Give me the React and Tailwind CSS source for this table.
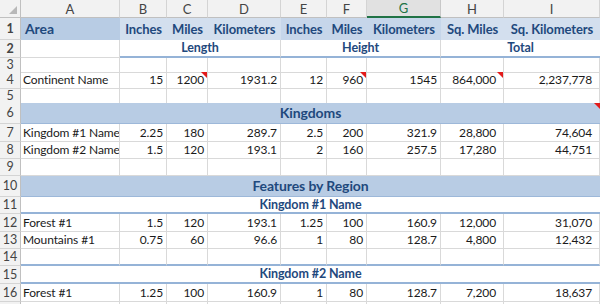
import React from "react";

const grid = "grid grid-cols-[21px_99px_47px_41px_73px_46px_40px_74px_63px_96px]";
const navy = "text-[#1f497d]";

function RowHead({ n }) {
  return (
    <div className="flex items-center justify-center border-r border-b border-r-[#c0c0c0] border-b-[#d4d4d4] bg-[#f2f2f2] text-[12.5px] tracking-normal text-[#444]">
      {n}
    </div>
  );
}

function Cell({ children, left, wide, note, className = "" }) {
  return (
    <div
      className={`relative flex items-center overflow-hidden whitespace-nowrap border-r border-b border-[#d9d9d9] ${
        left ? "justify-start pl-[2px]" : wide ? "justify-end pr-[7px]" : "justify-end pr-[3px]"
      } ${className}`}
    >
      {children}
      {note ? (
        <span className="absolute top-0 right-0 h-0 w-0 border-t-[6px] border-l-[6px] border-t-[#e21b1b] border-l-transparent" />
      ) : null}
    </div>
  );
}

function DataRow({ n, h, values, notes = [], className = "" }) {
  return (
    <div className={`${grid} ${h}`}>
      <RowHead n={n} />
      {values.map((v, i) => (
        <Cell
          key={i}
          left={i === 0}
          wide={i >= 7}
          note={notes.includes(i)}
          className={className}
        >
          {v}
        </Cell>
      ))}
    </div>
  );
}

function Band({ n, h, title, note }) {
  return (
    <div className={`${grid} ${h}`}>
      <RowHead n={n} />
      <div
        className={`relative col-span-9 flex items-center justify-center border-b border-[#9db8d9] bg-[#b8cce4] text-[14px] font-bold ${navy}`}
      >
        {title}
        {note ? (
          <span className="absolute top-0 right-0 h-0 w-0 border-t-[6px] border-l-[6px] border-t-[#e21b1b] border-l-transparent" />
        ) : null}
      </div>
    </div>
  );
}

function SubHead({ n, h, title }) {
  return (
    <div className={`${grid} ${h}`}>
      <RowHead n={n} />
      <div
        className={`col-span-9 flex items-center justify-center border-b-2 border-[#95b3d7] text-[12.5px] font-bold ${navy}`}
      >
        {title}
      </div>
    </div>
  );
}

const empty = ["", "", "", "", "", "", "", "", ""];

export default function App() {
  const letters = ["A", "B", "C", "D", "E", "F", "G", "H", "I"];

  return (
    <div className="h-[304px] w-[600px] overflow-hidden bg-white font-['Lato','Liberation_Sans',sans-serif] text-[12px] leading-[14px] tracking-[-0.1px] text-[#1a1a1a]">
      {/* column letters */}
      <div className={`${grid} h-[18px] text-[13px] tracking-normal`}>
        <div className="relative border-r border-b border-[#c0c0c0] bg-[#f2f2f2]">
          <span className="absolute right-[3px] bottom-[3px] h-0 w-0 border-b-[8px] border-l-[8px] border-b-[#b8b8b8] border-l-transparent" />
        </div>
        {letters.map((l) =>
          l === "G" ? (
            <div
              key={l}
              className="flex items-center justify-center border-r border-b-2 border-r-[#c8c8c8] border-b-[#217346] bg-[#e1e1e1] text-[#217346]"
            >
              {l}
            </div>
          ) : (
            <div
              key={l}
              className="flex items-center justify-center border-r border-b border-r-[#d4d4d4] border-b-[#c0c0c0] bg-[#f2f2f2] text-[#444]"
            >
              {l}
            </div>
          )
        )}
      </div>

      {/* row 1 */}
      <div className={`${grid} h-[22px] font-bold ${navy} text-[13px]`}>
        <RowHead n={1} />
        <div className="flex items-center bg-[#b8cce4] pl-[4px] text-[14px]">Area</div>
        <div className="flex items-center justify-center bg-[#d3dfee]">Inches</div>
        <div className="flex items-center justify-center bg-[#d3dfee]">Miles</div>
        <div className="flex items-center justify-center bg-[#d3dfee]">Kilometers</div>
        <div className="flex items-center justify-center bg-[#c6d6ea]">Inches</div>
        <div className="flex items-center justify-center bg-[#c6d6ea]">Miles</div>
        <div className="flex items-center justify-center bg-[#c6d6ea]">Kilometers</div>
        <div className="flex items-center justify-center bg-[#d3dfee]">Sq. Miles</div>
        <div className="flex items-center justify-center bg-[#d3dfee]">Sq. Kilometers</div>
      </div>

      {/* row 2 */}
      <div className={`${grid} h-[18px] text-[12.5px] font-bold ${navy}`}>
        <RowHead n={2} />
        <div className="border-r border-b border-[#d9d9d9]" />
        <div className="col-span-3 flex items-center justify-center border-r border-r-[#d9d9d9] border-b-2 border-b-[#95b3d7]">
          Length
        </div>
        <div className="col-span-3 flex items-center justify-center border-r border-r-[#d9d9d9] border-b-2 border-b-[#95b3d7]">
          Height
        </div>
        <div className="col-span-2 flex items-center justify-center border-b-2 border-b-[#95b3d7]">
          Total
        </div>
      </div>

      <DataRow n={3} h="h-[14px]" values={empty} />
      <DataRow
        n={4}
        h="h-[17px]"
        values={["Continent Name", "15", "1200", "1931.2", "12", "960", "1545", "864,000", "2,237,778"]}
        notes={[2, 5, 7]}
      />
      <DataRow n={5} h="h-[14px]" values={empty} />
      <Band n={6} h="h-[21px]" title="Kingdoms" note />
      <DataRow
        n={7}
        h="h-[18px]"
        values={["Kingdom #1 Name", "2.25", "180", "289.7", "2.5", "200", "321.9", "28,800", "74,604"]}
      />
      <DataRow
        n={8}
        h="h-[17px]"
        values={["Kingdom #2 Name", "1.5", "120", "193.1", "2", "160", "257.5", "17,280", "44,751"]}
      />
      <DataRow n={9} h="h-[17px]" values={empty} />
      <Band n={10} h="h-[21px]" title="Features by Region" />
      <SubHead n={11} h="h-[17px]" title="Kingdom #1 Name" />
      <DataRow
        n={12}
        h="h-[18px]"
        values={["Forest #1", "1.5", "120", "193.1", "1.25", "100", "160.9", "12,000", "31,070"]}
      />
      <DataRow
        n={13}
        h="h-[17px]"
        values={["Mountains #1", "0.75", "60", "96.6", "1", "80", "128.7", "4,800", "12,432"]}
      />
      <DataRow n={14} h="h-[17px]" values={empty} className="border-b-2 border-b-[#95b3d7]" />
      <SubHead n={15} h="h-[18px]" title="Kingdom #2 Name" />
      <DataRow
        n={16}
        h="h-[18px]"
        values={["Forest #1", "1.25", "100", "160.9", "1", "80", "128.7", "7,200", "18,637"]}
      />
      {/* only a sliver of row 17 shows */}
      <DataRow n="" h="h-[18px]" values={empty} />
    </div>
  );
}
